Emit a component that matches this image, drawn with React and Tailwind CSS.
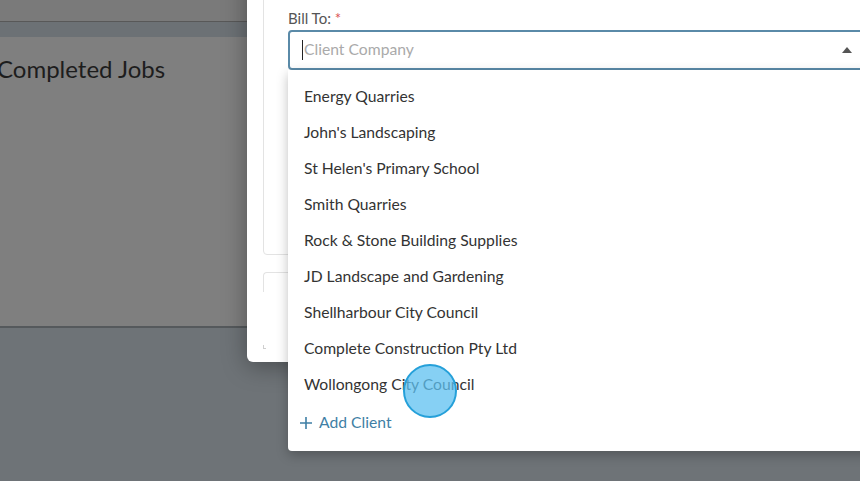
import React from "react";

const clients = [
  "Energy Quarries",
  "John's Landscaping",
  "St Helen's Primary School",
  "Smith Quarries",
  "Rock & Stone Building Supplies",
  "JD Landscape and Gardening",
  "Shellharbour City Council",
  "Complete Construction Pty Ltd",
  "Wollongong City Council",
];

export default function App() {
  return (
    <div
      className="relative w-[860px] h-[481px] overflow-hidden bg-[#6e7377]"
      style={{ fontFamily: "Lato, 'Noto Sans', sans-serif" }}
    >
      {/* dimmed page */}
      <div className="flex flex-col">
        <div className="h-[22px] bg-[#7a7a7a] border-b border-[#585858]" />
        <div className="h-[15px] bg-[#6c7175]" />
        <div className="h-[291px] bg-[#7f7f7f] border-b-2 border-[#55595c] pt-[17px]">
          <div className="text-[24px] text-[#1d1d1d] -ml-[3px] leading-[30px] whitespace-nowrap">Completed Jobs</div>
        </div>
      </div>

      {/* modal */}
      <div className="absolute left-[247px] top-[-40px] w-[640px] h-[402px] bg-white rounded-md overflow-hidden shadow-[0_4px_24px_rgba(0,0,0,0.35)] flex flex-col pt-[10px] px-[16px]">
        <div className="h-[285px] border border-[#e3e3e3] rounded flex flex-col pt-[38px] pl-[24px]">
          <div className="text-[15px] leading-[18px] text-[#555]">
            Bill To: <span className="text-[#d9534f]">*</span>
          </div>
          <div className="mt-[3px] w-[600px] h-[40px] border-2 border-[#5a8aa8] rounded-l-[4px] flex items-center pl-[12px] relative">
            <span className="w-px h-[20px] bg-[#222]" />
            <span className="text-[15.7px] text-[#aaa] ml-px">Client Company</span>
            <span className="absolute left-[552px] top-[15px] w-0 h-0 border-l-[5px] border-r-[5px] border-b-[6px] border-l-transparent border-r-transparent border-b-[#555]" />
          </div>
        </div>
        <div className="mt-[17px] h-[20px] border-t border-l border-[#e3e3e3] rounded-tl" />
        <div className="mt-[53px] w-[3px] h-[4px] border-l border-b border-[#cfcfcf]" />
      </div>

      {/* dropdown menu */}
      <div className="absolute left-[288px] top-[70px] w-[600px] h-[381px] bg-white rounded-bl-[4px] shadow-[0_4px_12px_rgba(0,0,0,0.25)] pt-[9px] flex flex-col">
        {clients.map((c) => (
          <div key={c} className="h-[36px] flex items-center pl-[16px] text-[15.7px] text-[#333] whitespace-nowrap">
            {c}
          </div>
        ))}
        <div className="h-[36px] mt-[2px] flex items-center pl-[11px] text-[15.7px] text-[#3f7fa5]">
          <svg width="14" height="14" viewBox="0 0 14 14" className="mr-[6px]">
            <path d="M7 1v12M1 7h12" stroke="#3f7fa5" strokeWidth="1.6" />
          </svg>
          Add Client
        </div>
      </div>

      {/* click indicator */}
      <div className="absolute left-[403px] top-[364px] w-[54px] h-[54px] rounded-full bg-[#5ec0f0]/75 border-2 border-[#25a0d9]" />
    </div>
  );
}
